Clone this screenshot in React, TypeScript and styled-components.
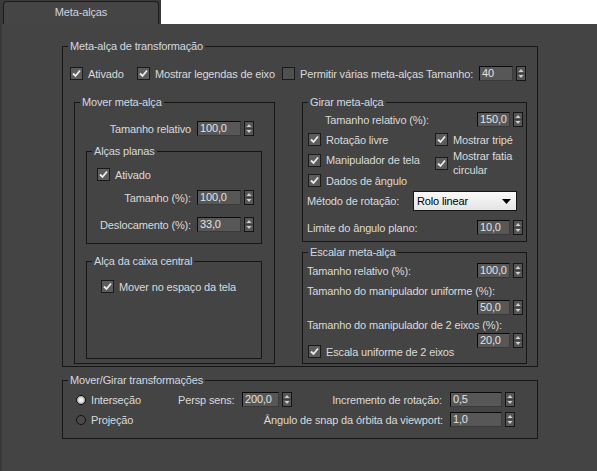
import React from 'react'
import styled, {createGlobalStyle, css} from 'styled-components'

const GlobalStyle = createGlobalStyle`
  html, body {
    margin: 0;
    padding: 0;
    background: #444444;
  }
  body {
    font-family: "Liberation Sans", Arial, sans-serif;
    font-size: 11px;
    letter-spacing: -0.15px;
    color: #dadada;
  }
`

const Page = styled.div`
  width: 597px;
  height: 471px;
  display: flex;
  flex-direction: column;
  overflow: hidden;
`

const TabBar = styled.div`
  flex: none;
  height: 24px;
  display: flex;
  background: #ffffff;
`

const TabStrip = styled.div`
  width: 161px;
  box-sizing: border-box;
  padding: 1px 2px 0 3px;
  display: flex;
  background: #3a3a3a;
`

const Tab = styled.div`
  flex: 1;
  background: #454545;
  border: 1px solid #1c1c1c;
  border-bottom: none;
  border-radius: 4px 4px 0 0;
  text-align: center;
  line-height: 21px;
  color: #cfd5de;
`

const Main = styled.div`
  flex: 1;
  background: #444444;
  border-left: 2px solid #383838;
  padding: 16px 0 0 60px;
`

const Group = styled.fieldset<{$w: number; $h: number}>`
  margin: 0;
  padding: 0;
  min-width: 0;
  box-sizing: border-box;
  border: 1px solid #161616;
  width: ${p => p.$w}px;
  height: ${p => p.$h}px;
`

const Legend = styled.legend`
  margin-left: 5px;
  padding: 0 2px;
  line-height: 13px;
  color: #d3d8e0;
`

const Body = styled.div<{$pad: string}>`
  padding: ${p => p.$pad};
  display: flex;
  flex-direction: column;
`

const Row = styled.div<{$mt?: number; $pl?: number; $pr?: number}>`
  display: flex;
  align-items: center;
  margin-top: ${p => p.$mt || 0}px;
  padding-left: ${p => p.$pl || 0}px;
  padding-right: ${p => p.$pr || 0}px;
`

const Label = styled.span<{$w?: number; $right?: boolean; $grow?: boolean}>`
  flex: ${p => (p.$grow ? 'auto' : 'none')};
  white-space: nowrap;
  line-height: 14px;
  ${p => p.$w && css`width: ${p.$w}px;`}
  ${p => p.$right && css`text-align: right;`}
`

const Text = styled.div<{$mt?: number; $pl?: number}>`
  line-height: 14px;
  white-space: nowrap;
  margin-top: ${p => p.$mt || 0}px;
  padding-left: ${p => p.$pl || 0}px;
`

const Field = styled.div<{$w: number; $ml: number}>`
  flex: none;
  box-sizing: border-box;
  width: ${p => p.$w}px;
  height: 15px;
  margin-left: ${p => p.$ml}px;
  padding-left: 2px;
  line-height: 13px;
  background: #575757;
  border-top: 1px solid #0c0c0c;
  border-left: 1px solid #0c0c0c;
  border-right: 1px solid #3a3a3a;
  border-bottom: 1px solid #3a3a3a;
  color: #e2e2e2;
`

const SpinButtons = styled.svg`
  flex: none;
  margin-left: 3px;
  display: block;
`

const CheckItem = styled.div<{$w?: number}>`
  flex: none;
  display: flex;
  align-items: center;
  white-space: nowrap;
  ${p => p.$w && css`width: ${p.$w}px;`}
`

const Box = styled.span<{$on: boolean}>`
  flex: none;
  box-sizing: border-box;
  width: 13px;
  height: 13px;
  margin-right: 5px;
  border: 1px solid #1a1a1a;
  background: ${p => (p.$on ? '#5c5c5c' : '#4f4f4f')};
  display: flex;
  align-items: center;
  justify-content: center;
`

const Radio = styled.span<{$on: boolean}>`
  flex: none;
  box-sizing: border-box;
  width: 10px;
  height: 10px;
  margin-right: 5px;
  border-radius: 50%;
  border: 1px solid #111;
  background: ${p => (p.$on ? 'radial-gradient(circle, #f0f0f0 0 2px, #b8b8b8 3px)' : '#4a4a4a')};
`

const ChecksBlock = styled.div`
  display: flex;
  margin-top: 6px;
  padding-left: 5px;
`

const CheckColumn = styled.div<{$w?: number; $gap: number}>`
  display: flex;
  flex-direction: column;
  gap: ${p => p.$gap}px;
  ${p => p.$w && css`width: ${p.$w}px;`}
`

const TwoLine = styled.div`
  line-height: 14px;
`

const Columns = styled.div`
  display: flex;
  gap: 27px;
  margin-top: 15px;
  padding-left: 11px;
`

const Stack = styled.div`
  display: flex;
  flex-direction: column;
  gap: 4px;
`

const Inset = styled.div<{$mt: number}>`
  margin-top: ${p => p.$mt}px;
  margin-left: 11px;
`

const Dropdown = styled.div`
  flex: none;
  box-sizing: border-box;
  width: 104px;
  height: 20px;
  border: 1px solid #141414;
  background: linear-gradient(#fafafa, #e4e4e4);
  color: #000;
  display: flex;
  align-items: center;
  justify-content: space-between;
  padding: 0 5px 0 3px;
`

const BottomGroupWrap = styled.div`
  margin-top: 7px;
`

function Spinner() {
  return (
    <SpinButtons width="10" height="15" viewBox="0 0 10 15">
      <rect x="0.5" y="0.5" width="9" height="14" fill="#555" stroke="#151515"/>
      <line x1="1" y1="7.5" x2="9" y2="7.5" stroke="#3e3e3e"/>
      <path d="M2.5 6 L5 3 L7.5 6 Z" fill="#cfcfcf"/>
      <path d="M2.5 9 L7.5 9 L5 12 Z" fill="#cfcfcf"/>
    </SpinButtons>
  )
}

function Num(props: {value: string; w: number; ml: number}) {
  return (
    <>
      <Field $w={props.w} $ml={props.ml}>{props.value}</Field>
      <Spinner/>
    </>
  )
}

function Check(props: {on?: boolean; w?: number; children: React.ReactNode}) {
  return (
    <CheckItem $w={props.w}>
      <Box $on={!!props.on}>
        {props.on && (
          <svg width="9" height="9" viewBox="0 0 9 9">
            <path d="M1 4.5 L3.5 7 L8 1.5" fill="none" stroke="#ececec" strokeWidth="1.8"/>
          </svg>
        )}
      </Box>
      {props.children}
    </CheckItem>
  )
}

function Option(props: {on?: boolean; w: number; children: React.ReactNode}) {
  return (
    <CheckItem $w={props.w}>
      <Radio $on={!!props.on}/>
      {props.children}
    </CheckItem>
  )
}

export default function App() {
  return (
    <Page>
      <GlobalStyle/>
      <TabBar>
        <TabStrip>
          <Tab>Meta-alças</Tab>
        </TabStrip>
      </TabBar>
      <Main>
        <Group $w={476} $h={327}>
          <Legend>Meta-alça de transformação</Legend>
          <Body $pad="13px 9px 0 0">
            <Row $pl={7}>
              <Check on w={67}>Ativado</Check>
              <Check on w={145}>Mostrar legendas de eixo</Check>
              <Check w={144}>Permitir várias meta-alças</Check>
              <Label $w={48}>Tamanho:</Label>
              <Num value="40" w={34} ml={5}/>
            </Row>
            <Columns>
              <Group $w={201} $h={268}>
                <Legend>Mover meta-alça</Legend>
                <Body $pad="12px 0 0 0">
                  <Row>
                    <Label $w={116} $right>Tamanho relativo</Label>
                    <Num value="100,0" w={44} ml={6}/>
                  </Row>
                  <Inset $mt={9}>
                    <Group $w={176} $h={99}>
                      <Legend>Alças planas</Legend>
                      <Body $pad="10px 0 0 10px">
                        <Check on>Ativado</Check>
                        <Row $mt={9}>
                          <Label $w={94} $right>Tamanho (%):</Label>
                          <Num value="100,0" w={44} ml={6}/>
                        </Row>
                        <Row $mt={12}>
                          <Label $w={94} $right>Deslocamento (%):</Label>
                          <Num value="33,0" w={44} ml={6}/>
                        </Row>
                      </Body>
                    </Group>
                  </Inset>
                  <Inset $mt={11}>
                    <Group $w={176} $h={104}>
                      <Legend>Alça da caixa central</Legend>
                      <Body $pad="12px 0 0 14px">
                        <Check on>Mover no espaço da tela</Check>
                      </Body>
                    </Group>
                  </Inset>
                </Body>
              </Group>
              <Stack>
                <Group $w={225} $h={146}>
                  <Legend>Girar meta-alça</Legend>
                  <Body $pad="3px 0 0 0">
                    <Row $pl={22} $pr={3}>
                      <Label $grow>Tamanho relativo (%):</Label>
                      <Num value="150,0" w={33} ml={6}/>
                    </Row>
                    <ChecksBlock>
                      <CheckColumn $w={127} $gap={7.5}>
                        <Check on>Rotação livre</Check>
                        <Check on>Manipulador de tela</Check>
                        <Check on>Dados de ângulo</Check>
                      </CheckColumn>
                      <CheckColumn $gap={3}>
                        <Check on>Mostrar tripé</Check>
                        <Check on>
                          <TwoLine>Mostrar fatia<br/>circular</TwoLine>
                        </Check>
                      </CheckColumn>
                    </ChecksBlock>
                    <Row $mt={4} $pl={4}>
                      <Label $w={106}>Método de rotação:</Label>
                      <Dropdown>
                        <span>Rolo linear</span>
                        <svg width="9" height="5" viewBox="0 0 9 5">
                          <path d="M0 0 L9 0 L4.5 5 Z" fill="#000"/>
                        </svg>
                      </Dropdown>
                    </Row>
                    <Row $mt={9} $pl={4} $pr={3}>
                      <Label $grow>Limite do ângulo plano:</Label>
                      <Num value="10,0" w={33} ml={6}/>
                    </Row>
                  </Body>
                </Group>
                <Group $w={225} $h={118}>
                  <Legend>Escalar meta-alça</Legend>
                  <Body $pad="4px 3px 0 0">
                    <Row $pl={4}>
                      <Label $grow>Tamanho relativo (%):</Label>
                      <Num value="100,0" w={33} ml={6}/>
                    </Row>
                    <Text $mt={6} $pl={4}>Tamanho do manipulador uniforme (%):</Text>
                    <Row $mt={2}>
                      <Label $grow/>
                      <Num value="50,0" w={33} ml={6}/>
                    </Row>
                    <Text $mt={3} $pl={4}>Tamanho do manipulador de 2 eixos (%):</Text>
                    <Row $mt={1}>
                      <Label $grow/>
                      <Num value="20,0" w={33} ml={6}/>
                    </Row>
                    <Row $mt={-3} $pl={5}>
                      <Check on>Escala uniforme de 2 eixos</Check>
                    </Row>
                  </Body>
                </Group>
              </Stack>
            </Columns>
          </Body>
        </Group>
        <BottomGroupWrap>
          <Group $w={476} $h={65}>
            <Legend>Mover/Girar transformações</Legend>
            <Body $pad="5px 22px 0 13px">
              <Row>
                <Option on w={102}>Interseção</Option>
                <Label $w={56}>Persp sens:</Label>
                <Num value="200,0" w={37} ml={8}/>
                <Label $grow $right>Incremento de rotação:</Label>
                <Num value="0,5" w={52} ml={8}/>
              </Row>
              <Row $mt={5}>
                <Option w={102}>Projeção</Option>
                <Label $grow $right>Ângulo de snap da órbita da viewport:</Label>
                <Num value="1,0" w={52} ml={7}/>
              </Row>
            </Body>
          </Group>
        </BottomGroupWrap>
      </Main>
    </Page>
  )
}
